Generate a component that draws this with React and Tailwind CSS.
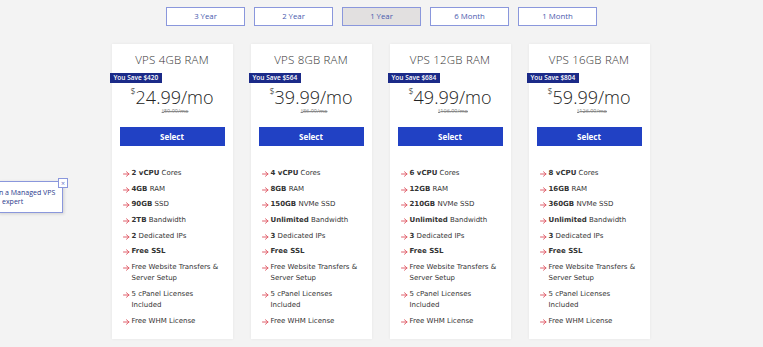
import React from 'react'

const tabs = ['3 Year', '2 Year', '1 Year', '6 Month', '1 Month']

const plans = [
  { name: 'VPS 4GB RAM', save: '$420', price: '24.99', old: '59.99', cpu: '2', ram: '4GB', disk: '90GB', diskType: 'SSD', bw: '2TB', ips: '2' },
  { name: 'VPS 8GB RAM', save: '$564', price: '39.99', old: '86.99', cpu: '4', ram: '8GB', disk: '150GB', diskType: 'NVMe SSD', bw: 'Unlimited', ips: '3' },
  { name: 'VPS 12GB RAM', save: '$684', price: '49.99', old: '106.99', cpu: '6', ram: '12GB', disk: '210GB', diskType: 'NVMe SSD', bw: 'Unlimited', ips: '3' },
  { name: 'VPS 16GB RAM', save: '$804', price: '59.99', old: '126.99', cpu: '8', ram: '16GB', disk: '360GB', diskType: 'NVMe SSD', bw: 'Unlimited', ips: '3' },
]

function Arrow() {
  return (
    <svg width="7" height="6" viewBox="0 0 7 6" className="shrink-0 mt-[3px]" fill="none" stroke="#e0606c" strokeWidth="1" strokeLinecap="round" strokeLinejoin="round">
      <line x1="0.5" y1="3" x2="6" y2="3" />
      <polyline points="3.5,0.8 6,3 3.5,5.2" />
    </svg>
  )
}

function Feature({ children }) {
  return (
    <li className="flex gap-[2px]">
      <Arrow />
      <span>{children}</span>
    </li>
  )
}

function PlanCard({ plan }) {
  return (
    <div className="w-[121px] bg-white shadow-[0_0_3px_rgba(0,0,0,0.06)] pt-[9px] pb-[12px]">
      <h3 className="text-center text-[11.5px] leading-[14px] tracking-[0.2px] text-[#333] font-light">{plan.name}</h3>
      <div className="mt-[6px] -ml-[2px] w-fit bg-[#1b2a88] text-white text-[6.5px] font-semibold px-[4px] leading-[10px]">
        You Save {plan.save}
      </div>
      <div className="flex justify-center h-[22px] mt-[3px] text-[#222] font-light">
        <span className="text-[9px] leading-[10px] mt-[1px]">$</span>
        <span className="text-[18px] leading-[22px]">{plan.price}/mo</span>
      </div>
      <div className="text-center h-[6px] text-[5.5px] leading-[6px] text-[#888] line-through pl-[6px]">
        <span className="text-[4px] align-top">$</span>{plan.old}/mo
      </div>
      <div className="px-[8px] mt-[13px]">
        <button className="block w-full h-[19px] bg-[#2141c4] text-white text-[8px] font-bold">Select</button>
      </div>
      <ul
        className="mt-[22px] pl-[11px] pr-[10px] flex flex-col gap-[4.7px] text-[7px] leading-[11px] text-[#333]"
        style={{ fontFamily: '"DejaVu Sans", "Open Sans", sans-serif' }}
      >
        <Feature><b>{plan.cpu} vCPU</b> Cores</Feature>
        <Feature><b>{plan.ram}</b> RAM</Feature>
        <Feature><b>{plan.disk}</b> {plan.diskType}</Feature>
        <Feature><b>{plan.bw}</b> Bandwidth</Feature>
        <Feature><b>{plan.ips}</b> Dedicated IPs</Feature>
        <Feature><b>Free SSL</b></Feature>
        <Feature>Free Website Transfers &amp; Server Setup</Feature>
        <Feature>5 cPanel Licenses Included</Feature>
        <Feature>Free WHM License</Feature>
      </ul>
    </div>
  )
}

export default function App() {
  return (
    <div className="relative w-[763px] h-[347px] bg-[#f3f3f3] overflow-hidden" style={{ fontFamily: '"Open Sans", "Liberation Sans", sans-serif' }}>
      <div className="flex justify-center gap-[9px] pt-[7px]">
        {tabs.map((t) => (
          <button
            key={t}
            className={`w-[79px] h-[19px] border border-[#8a97dc] text-[7.8px] text-[#4a5aae] ${t === '1 Year' ? 'bg-[#e2e0e0]' : 'bg-white'}`}
          >
            {t}
          </button>
        ))}
      </div>

      <div className="flex justify-center gap-[18px] mt-[18px] pr-[2px]">
        {plans.map((p) => (
          <PlanCard key={p.name} plan={p} />
        ))}
      </div>

      {/* chat popup, partly off screen */}
      <div className="absolute left-[-2px] top-[181px] w-[65px] h-[32px] bg-white border border-[#8a97dc] shadow-[1px_1px_3px_rgba(0,0,0,0.15)] text-[7px] leading-[9px] text-[#2b3a8c] pt-[6px] overflow-hidden whitespace-nowrap">
        <div>n a Managed VPS</div>
        <div className="pl-[3px]">expert</div>
      </div>
      <div className="absolute left-[58px] top-[178px] w-[10px] h-[10px] bg-white border border-[#8a97dc] flex items-center justify-center text-[7px] leading-none text-[#6a78c8]">
        ×
      </div>
    </div>
  )
}
